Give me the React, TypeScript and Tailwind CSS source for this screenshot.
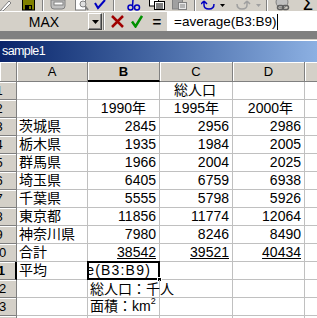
import React from 'react';

const rows = [
  { n: '3', a: '茨城県', b: '2845', c: '2956', d: '2986' },
  { n: '4', a: '栃木県', b: '1935', c: '1984', d: '2005' },
  { n: '5', a: '群馬県', b: '1966', c: '2004', d: '2025' },
  { n: '6', a: '埼玉県', b: '6405', c: '6759', d: '6938' },
  { n: '7', a: '千葉県', b: '5555', c: '5798', d: '5926' },
  { n: '8', a: '東京都', b: '11856', c: '11774', d: '12064' },
  { n: '9', a: '神奈川県', b: '7980', c: '8246', d: '8490' },
];

const RowHead = ({ n, active = false }: { n: string; active?: boolean }) => (
  <div
    className={`w-[17px] shrink-0 h-full bg-[#d4d0c8] border-b border-[#808080] flex justify-end items-center overflow-hidden shadow-[inset_0_1px_0_#fff] ${
      active ? 'border-r-2 border-r-black' : 'border-r border-r-[#808080]'
    }`}
  >
    <div className={`w-[34px] shrink-0 text-center text-[13px] leading-none ${active ? 'font-bold' : ''}`}>{n}</div>
  </div>
);

const Cell = ({ w, children, right = false }: { w: string; children?: React.ReactNode; right?: boolean }) => (
  <div
    className={`${w} shrink-0 h-full border-r border-b border-[#c0c0c0] flex items-end pb-[2px] leading-[14px] whitespace-nowrap ${
      right ? 'justify-end pr-[3px]' : 'pl-[2px]'
    }`}
  >
    {children}
  </div>
);

const Row = ({ n, a, b, c, d, active }: { n: string; a?: React.ReactNode; b?: React.ReactNode; c?: React.ReactNode; d?: React.ReactNode; active?: boolean }) => (
  <div className="h-[18px] flex">
    <RowHead n={n} active={active} />
    <Cell w="w-[71px]">{a}</Cell>
    <Cell w="w-[72px]" right>{b}</Cell>
    <Cell w="w-[73px]" right>{c}</Cell>
    <Cell w="w-[72px]" right>{d}</Cell>
    <div className="flex-1 h-full border-b border-[#c0c0c0]" />
  </div>
);

const Sep = () => <div className="w-[2px] h-[11px] border-l border-[#808080] border-r border-r-white shrink-0" />;

export default function App() {
  return (
    <div className="w-[317px] h-[318px] overflow-hidden bg-[#d4d0c8] text-black font-['Liberation_Sans','Noto_Sans_CJK_JP',sans-serif] text-[14px]">
      {/* toolbar (cut off at top) */}
      <div className="h-[11px] flex items-end overflow-hidden">
        <svg width="12" height="11" viewBox="0 0 12 11" className="shrink-0">
          <path d="M0 11 L9 1 L11 3 L3 11 Z" fill="#fff" stroke="#808080" />
        </svg>
        <svg width="14" height="11" viewBox="0 0 14 11" className="shrink-0 ml-[10px]">
          <rect x="0.5" y="-3" width="12" height="13" fill="#808000" stroke="#000" />
          <rect x="3" y="5" width="7" height="5" fill="#000" />
          <rect x="7" y="6" width="2" height="3" fill="#808000" />
        </svg>
        <div className="ml-[6px]"><Sep /></div>
        <svg width="17" height="11" viewBox="0 0 17 11" className="shrink-0 ml-[6px]">
          <path d="M1 0 H15 V6 Q15 9 12 9 H4 Q1 9 1 6 Z" fill="#c0c0c0" stroke="#808080" />
          <rect x="4" y="2" width="9" height="3" fill="#fff" stroke="#808080" />
        </svg>
        <svg width="16" height="11" viewBox="0 0 16 11" className="shrink-0 ml-[7px]">
          <rect x="1.5" y="-2" width="10" height="12" fill="#fff" stroke="#808080" />
          <circle cx="9" cy="4" r="3" fill="#e0e0e0" stroke="#808080" />
          <path d="M11 6 L14 10" stroke="#808080" strokeWidth="2" />
        </svg>
        <svg width="12" height="11" viewBox="0 0 12 11" className="shrink-0 ml-[4px]">
          <path d="M1 3 L4 8 L11 0" stroke="#0000c0" strokeWidth="2" fill="none" />
        </svg>
        <div className="ml-[7px]"><Sep /></div>
        <svg width="14" height="11" viewBox="0 0 14 11" className="shrink-0 ml-[12px]">
          <circle cx="3.5" cy="7.5" r="2.5" stroke="#0000c0" strokeWidth="1.5" fill="none" />
          <circle cx="10" cy="7.5" r="2.5" stroke="#0000c0" strokeWidth="1.5" fill="none" />
          <path d="M5.5 5.5 L6 0" stroke="#0000c0" strokeWidth="1.5" />
        </svg>
        <svg width="17" height="11" viewBox="0 0 17 11" className="shrink-0 ml-[8px]">
          <rect x="0.5" y="-3" width="9" height="9" fill="#fff" stroke="#000" />
          <rect x="5.5" y="1.5" width="10" height="8" fill="#fff" stroke="#000" />
          <path d="M7 4 H14 M7 6 H14 M7 8 H14" stroke="#000" />
        </svg>
        <svg width="16" height="11" viewBox="0 0 16 11" className="shrink-0 ml-[6px]">
          <rect x="0.5" y="-2" width="10" height="11" fill="#a0a0a0" stroke="#808080" />
          <rect x="6.5" y="2.5" width="8" height="7" fill="#e8e8e8" stroke="#808080" />
          <path d="M8 5 H13 M8 7 H13" stroke="#808080" />
        </svg>
        <div className="ml-[6px]"><Sep /></div>
        <svg width="26" height="11" viewBox="0 0 26 11" className="shrink-0 ml-[5px]">
          <path d="M3 1 L6 4 M3 1 L0 4 M3 1 V5 Q3 9 8 9 Q13 9 13 4" stroke="#0000c0" strokeWidth="1.5" fill="none" />
          <path d="M19 4 H24 L21.5 7 Z" fill="#000" />
        </svg>
        <svg width="30" height="11" viewBox="0 0 30 11" className="shrink-0 ml-[8px]">
          <path d="M12 1 L9 4 M12 1 L15 4 M12 1 V5 Q12 9 7 9 Q2 9 2 4" stroke="#a0a0a0" strokeWidth="1.5" fill="none" />
          <path d="M21 4 H26 L23.5 7 Z" fill="#a0a0a0" />
        </svg>
        <div className="ml-[1px]"><Sep /></div>
        <svg width="18" height="11" viewBox="0 0 18 11" className="shrink-0 ml-[6px]">
          <circle cx="8" cy="2" r="6" fill="#c0c0c0" stroke="#808080" />
          <rect x="3.5" y="5.5" width="6" height="4" rx="2" fill="none" stroke="#606060" strokeWidth="1.5" />
          <rect x="8.5" y="5.5" width="6" height="4" rx="2" fill="none" stroke="#606060" strokeWidth="1.5" />
        </svg>
        <div className="ml-[10px] h-[11px] overflow-hidden flex items-end">
          <span className="text-[18px] leading-[14px] font-['DejaVu_Sans',sans-serif]">Σ</span>
        </div>
      </div>

      {/* formula bar */}
      <div className="h-[20px] flex border-t border-white">
        <div className="w-[88px] shrink-0 flex items-center justify-center text-[14px] leading-none pt-[1px]">MAX</div>
        <div className="w-[14px] shrink-0 my-[1px] border border-white border-r-[#404040] border-b-[#404040] shadow-[inset_-1px_-1px_0_#808080] flex items-center justify-center">
          <svg width="7" height="4" viewBox="0 0 7 4">
            <path d="M0 0 H7 L3.5 4 Z" fill="#000" />
          </svg>
        </div>
        <div className="ml-[1px] my-[1px] w-[2px] border-l border-[#808080] border-r border-r-white shrink-0" />
        <div className="w-[20px] shrink-0 flex items-center justify-center ml-[2px]">
          <svg width="13" height="13" viewBox="0 0 13 13">
            <path d="M1 1 L12 12 M12 1 L1 12" stroke="#a00000" strokeWidth="2.5" />
          </svg>
        </div>
        <div className="w-[20px] shrink-0 flex items-center justify-center">
          <svg width="12" height="13" viewBox="0 0 12 13">
            <path d="M1 6.5 L4.5 11.5 L11 1" stroke="#009000" strokeWidth="2.5" fill="none" />
          </svg>
        </div>
        <div className="w-[20px] shrink-0 flex items-center justify-center font-bold text-[15px] leading-none">=</div>
        <div className="flex-1 bg-white flex items-center pl-[7px] text-[13.5px] leading-none whitespace-nowrap">
          =average(B3:B9)
          <span className="w-[1px] h-[16px] bg-black ml-[1px]" />
        </div>
      </div>

      {/* gray band */}
      <div className="h-[8px] bg-[#808080]" />
      <div className="h-[1px] bg-[#d4d0c8]" />
      <div className="h-[1px] bg-white" />

      {/* title bar */}
      <div className="h-[21px] bg-gradient-to-r from-[#0a246a] to-[#8cb0e2] flex items-center pl-[2px] text-white text-[12.5px] tracking-[-0.6px]">
        sample1
      </div>

      {/* sheet */}
      <div className="bg-white">
        <div className="h-[20px] flex bg-[#d4d0c8]">
          <div className="w-[17px] shrink-0 border-r border-b border-[#808080] shadow-[inset_1px_1px_0_#fff]" />
          <div className="w-[71px] shrink-0 border-r border-b border-[#808080] shadow-[inset_1px_1px_0_#fff] flex items-center justify-center text-[13px] leading-none">A</div>
          <div className="w-[72px] shrink-0 border-r border-[#808080] border-b-2 border-b-black shadow-[inset_1px_1px_0_#fff] flex items-center justify-center text-[13px] font-bold leading-none">B</div>
          <div className="w-[73px] shrink-0 border-r border-b border-[#808080] shadow-[inset_1px_1px_0_#fff] flex items-center justify-center text-[13px] leading-none">C</div>
          <div className="w-[72px] shrink-0 border-r border-b border-[#808080] shadow-[inset_1px_1px_0_#fff] flex items-center justify-center text-[13px] leading-none">D</div>
          <div className="flex-1 border-b border-[#808080] shadow-[inset_1px_1px_0_#fff]" />
        </div>

        <Row n="1" c={<span className="pr-[13px]">総人口</span>} />
        <Row n="2" b={<span className="pr-[10px]">1990年</span>} c={<span className="pr-[10px]">1995年</span>} d={<span className="pr-[8px]">2000年</span>} />
        {rows.map((r) => (
          <Row key={r.n} n={r.n} a={r.a} b={r.b} c={r.c} d={r.d} />
        ))}
        <Row
          n="10"
          a="合計"
          b={<span className="underline underline-offset-[1px]">38542</span>}
          c={<span className="underline underline-offset-[1px]">39521</span>}
          d={<span className="underline underline-offset-[1px]">40434</span>}
        />

        {/* row 11 with active cell */}
        <div className="h-[18px] flex">
          <RowHead n="11" active />
          <Cell w="w-[71px]">平均</Cell>
          <div className="w-[72px] shrink-0 h-full border-r border-b border-[#c0c0c0] relative">
            <div className="absolute -left-[1px] -top-[1px] -right-[1px] -bottom-[1px] border-2 border-black overflow-hidden flex items-end justify-end pr-[7px] pb-[1px] leading-[14px] whitespace-nowrap tracking-[1.2px]">
              =average(B3:B9)
            </div>
            <div className="absolute -right-[3px] -bottom-[3px] w-[5px] h-[5px] bg-black border border-white" />
          </div>
          <Cell w="w-[73px]" />
          <Cell w="w-[72px]" />
          <div className="flex-1 h-full border-b border-[#c0c0c0]" />
        </div>

        <div className="h-[18px] flex">
          <RowHead n="12" />
          <Cell w="w-[71px]" />
          <div className="w-[72px] shrink-0 h-full border-r border-b border-[#c0c0c0] flex items-end pb-[1px] pl-[2px] leading-[14px] whitespace-nowrap relative z-10">
            総人口：千人
          </div>
          <Cell w="w-[73px]" />
          <Cell w="w-[72px]" />
          <div className="flex-1 h-full border-b border-[#c0c0c0]" />
        </div>

        <div className="h-[18px] flex">
          <RowHead n="13" />
          <Cell w="w-[71px]" />
          <Cell w="w-[72px]">
            <span>
              面積：km<sup className="text-[9px] leading-none align-[3px]">2</sup>
            </span>
          </Cell>
          <Cell w="w-[73px]" />
          <Cell w="w-[72px]" />
          <div className="flex-1 h-full border-b border-[#c0c0c0]" />
        </div>
        <div className="h-[18px] flex">
          <RowHead n="14" />
          <Cell w="w-[71px]" />
          <Cell w="w-[72px]" />
          <Cell w="w-[73px]" />
          <Cell w="w-[72px]" />
          <div className="flex-1 h-full border-b border-[#c0c0c0]" />
        </div>
      </div>
    </div>
  );
}
